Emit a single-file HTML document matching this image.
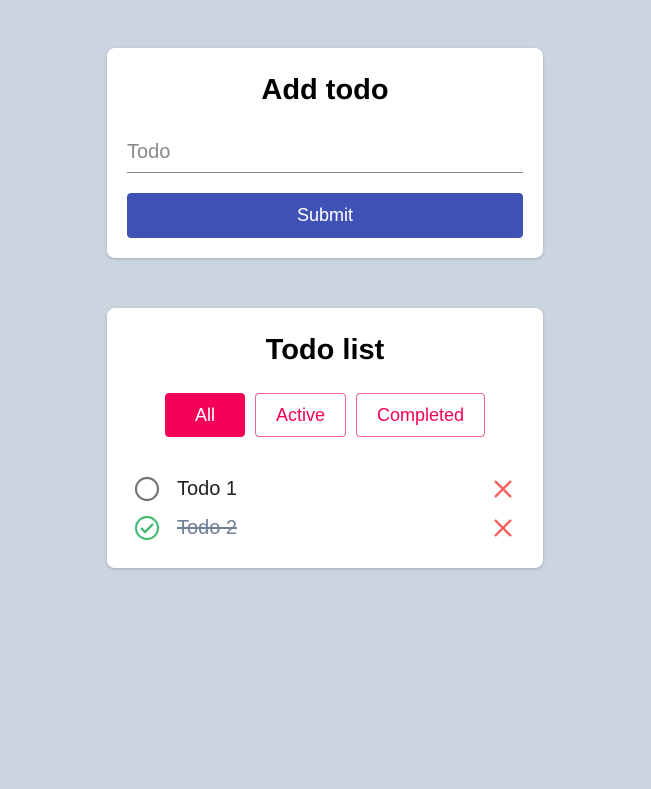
<!DOCTYPE html>
<html><head><style>
body{margin:0;width:651px;height:789px;background:#cbd5e0;font-family:"Liberation Sans",sans-serif;position:relative}
.card{position:absolute;left:107px;width:436px;background:#fff;border-radius:8px;box-shadow:0 1px 3px rgba(0,0,0,.2)}
h2{margin:0;text-align:center;font-size:29px;font-weight:bold;position:absolute;left:0;right:0}
.btn{position:absolute;top:85px;height:44px;box-sizing:border-box;border-radius:4px;font-size:18px;display:flex;align-items:center;justify-content:center}
.o{border:1px solid #f06292;color:#f50057}
.row{position:absolute;left:0;right:0;height:30px;font-size:20px}
</style></head><body>
<div class="card" style="top:48px;height:210px">
<h2 style="top:26px">Add todo</h2>
<div style="position:absolute;left:20px;top:93px;font-size:20px;color:#8a8a8a">Todo</div>
<div style="position:absolute;left:20px;right:20px;top:124px;height:1px;background:#888"></div>
<div style="position:absolute;left:20px;right:20px;top:145px;height:45px;background:#3f51b5;border-radius:4px;color:#fff;font-size:18px;display:flex;align-items:center;justify-content:center">Submit</div>
</div>
<div class="card" style="top:308px;height:260px">
<h2 style="top:26px">Todo list</h2>
<div class="btn" style="left:58px;width:80px;background:#f50057;color:#fff">All</div>
<div class="btn o" style="left:148px;width:91px">Active</div>
<div class="btn o" style="left:249px;width:129px">Completed</div>
<div class="row" style="top:166px">
<svg style="position:absolute;left:27px;top:2px" width="26" height="26"><circle cx="13" cy="13" r="11" fill="none" stroke="#757575" stroke-width="2.2"/></svg>
<span style="position:absolute;left:70px;top:4px;color:#222">Todo 1</span>
<svg style="position:absolute;left:386px;top:5px" width="20" height="20"><path d="M2 2L18 18M18 2L2 18" stroke="#f4645f" stroke-width="2.4"/></svg>
</div>
<div class="row" style="top:205px">
<svg style="position:absolute;left:27px;top:2px" width="26" height="26"><circle cx="13" cy="13" r="11" fill="none" stroke="#48bb78" stroke-width="2.2"/><path d="M7 13l4 4 8-8" fill="none" stroke="#48bb78" stroke-width="2.4"/></svg>
<span style="position:absolute;left:70px;top:4px;color:#718096;text-decoration:line-through">Todo 2</span>
<svg style="position:absolute;left:386px;top:5px" width="20" height="20"><path d="M2 2L18 18M18 2L2 18" stroke="#f4645f" stroke-width="2.4"/></svg>
</div>
</div>
</body></html>
